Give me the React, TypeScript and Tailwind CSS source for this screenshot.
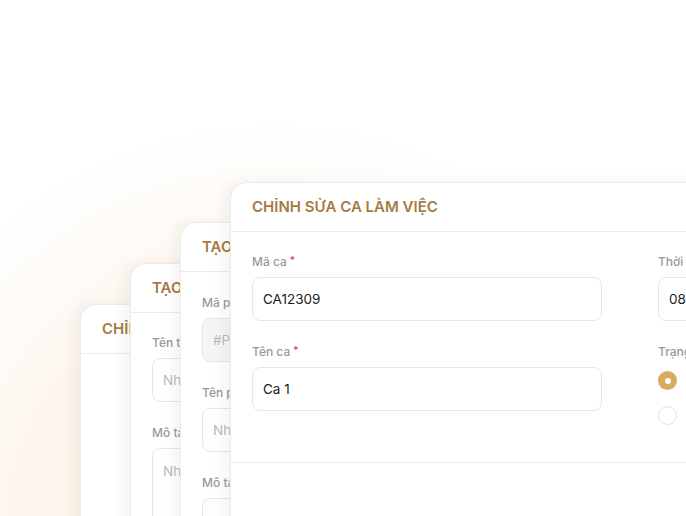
import React from 'react'

const font = { fontFamily: 'Inter, "Noto Sans", sans-serif' }

function Label(props: { text: string; required?: boolean }) {
  return (
    <div className="h-4 flex items-start text-[12px] font-medium text-[#999999] leading-4 whitespace-nowrap">
      <span>{props.text}</span>
      {props.required && <span className="ml-[3px] text-[#e5392f] text-[10px] leading-3">*</span>}
    </div>
  )
}

function Input(props: { value?: string; placeholder?: string; disabled?: boolean; tall?: boolean }) {
  return (
    <div
      className={`mt-[7px] w-full rounded-lg border border-[#e6e6e6] px-[10px] text-[13.5px] whitespace-nowrap overflow-hidden ${
        props.tall ? 'h-[120px] pt-[12px]' : 'h-[44px] flex items-center'
      } ${props.disabled ? 'bg-[#f5f5f5]' : 'bg-white'}`}
    >
      {props.value ? (
        <span className="text-[#222]">{props.value}</span>
      ) : (
        <span className="text-[#b8b8b8]">{props.placeholder}</span>
      )}
    </div>
  )
}

function Card(props: { title: string; className: string; children?: React.ReactNode }) {
  return (
    <div
      className={`absolute w-[560px] h-[420px] bg-white rounded-2xl border border-[#ebebeb] shadow-[-6px_0_14px_rgba(60,40,20,0.05)] overflow-hidden ${props.className}`}
    >
      <div className="h-[49px] border-b border-[#ebebeb] px-[21px] flex items-center">
        <h2 className="text-[15px] font-semibold text-[#a67a44] whitespace-nowrap">
          {props.title}
        </h2>
      </div>
      {props.children}
    </div>
  )
}

function Radio(props: { checked?: boolean }) {
  return props.checked ? (
    <div className="w-[19px] h-[19px] shrink-0 rounded-full bg-[#d9ab5e] flex items-center justify-center">
      <div className="w-[6px] h-[6px] rounded-full bg-white" />
    </div>
  ) : (
    <div className="w-[19px] h-[19px] shrink-0 rounded-full border border-[#e2e2e2] bg-white" />
  )
}

export default function App() {
  return (
    <div
      style={font}
      className="relative w-[686px] h-[516px] overflow-hidden bg-[radial-gradient(circle_at_40%_105%,#fbeedf_0%,#fdf6ee_38%,#ffffff_62%)]"
    >
      <Card title="CHỈNH SỬA PHÒNG BAN" className="left-[80px] top-[304px]" />

      <Card title="TẠO THIẾT BỊ MỚI" className="left-[130px] top-[263px]">
        <div className="px-[21px] pt-[22px] flex flex-col gap-[23px] w-[372px]">
          <div>
            <Label text="Tên thiết bị" />
            <Input placeholder="Nhập tên thiết bị" />
          </div>
          <div>
            <Label text="Mô tả" />
            <Input placeholder="Nhập mô tả" tall />
          </div>
        </div>
      </Card>

      <Card title="TẠO PHÒNG MỚI" className="left-[180px] top-[222px]">
        <div className="px-[21px] pt-[23px] flex flex-col gap-[23px] w-[372px]">
          <div>
            <Label text="Mã phòng" />
            <Input placeholder="#P0012" disabled />
          </div>
          <div>
            <Label text="Tên phòng" />
            <Input placeholder="Nhập tên phòng" />
          </div>
          <div>
            <Label text="Mô tả" />
            <Input placeholder="Nhập mô tả" tall />
          </div>
        </div>
      </Card>

      <Card title="CHỈNH SỬA CA LÀM VIỆC" className="left-[230px] top-[182px] w-[600px]">
        <div className="px-[21px] pt-[22px] pb-[51px] border-b border-[#ebebeb] grid grid-cols-[350px_350px] gap-x-[56px] gap-y-[23px]">
          <div>
            <Label text="Mã ca" required />
            <Input value="CA12309" />
          </div>
          <div>
            <Label text="Thời gian" />
            <Input value="08:00 - 12:00" />
          </div>
          <div>
            <Label text="Tên ca" required />
            <Input value="Ca 1" />
          </div>
          <div className="h-[67px]">
            <Label text="Trạng thái" />
            <div className="mt-[11px] flex flex-col gap-[16px]">
              <div className="h-[19px] flex items-center gap-3 text-[13.5px] leading-[19px] text-[#222]">
                <Radio checked />
                <span>Hoạt động</span>
              </div>
              <div className="h-[19px] flex items-center gap-3 text-[13.5px] leading-[19px] text-[#222]">
                <Radio />
                <span>Ngừng hoạt động</span>
              </div>
            </div>
          </div>
        </div>
      </Card>
    </div>
  )
}
